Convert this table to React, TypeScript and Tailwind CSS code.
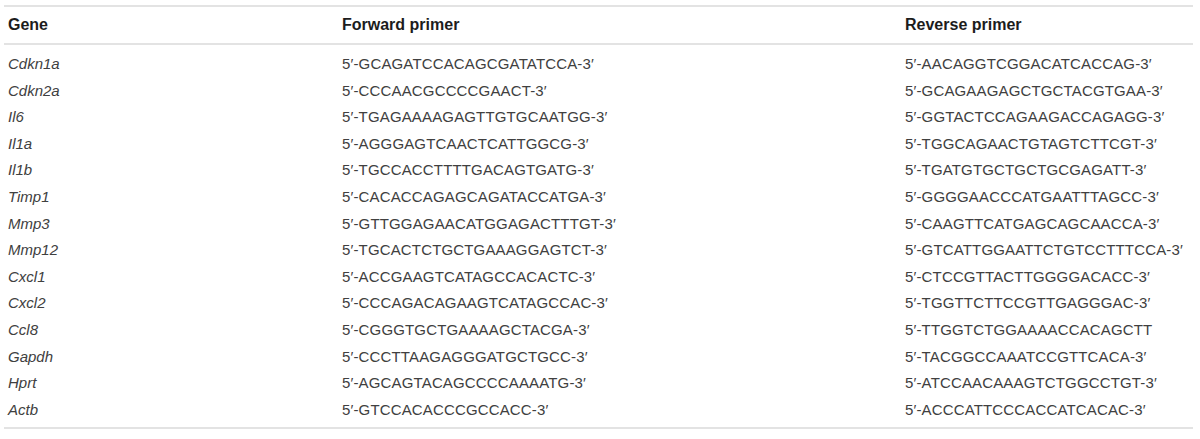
const rows: [string, string, string][] = [
  ['Cdkn1a', "5′-GCAGATCCACAGCGATATCCA-3′", "5′-AACAGGTCGGACATCACCAG-3′"],
  ['Cdkn2a', "5′-CCCAACGCCCCGAACT-3′", "5′-GCAGAAGAGCTGCTACGTGAA-3′"],
  ['Il6', "5′-TGAGAAAAGAGTTGTGCAATGG-3′", "5′-GGTACTCCAGAAGACCAGAGG-3′"],
  ['Il1a', "5′-AGGGAGTCAACTCATTGGCG-3′", "5′-TGGCAGAACTGTAGTCTTCGT-3′"],
  ['Il1b', "5′-TGCCACCTTTTGACAGTGATG-3′", "5′-TGATGTGCTGCTGCGAGATT-3′"],
  ['Timp1', "5′-CACACCAGAGCAGATACCATGA-3′", "5′-GGGGAACCCATGAATTTAGCC-3′"],
  ['Mmp3', "5′-GTTGGAGAACATGGAGACTTTGT-3′", "5′-CAAGTTCATGAGCAGCAACCA-3′"],
  ['Mmp12', "5′-TGCACTCTGCTGAAAGGAGTCT-3′", "5′-GTCATTGGAATTCTGTCCTTTCCA-3′"],
  ['Cxcl1', "5′-ACCGAAGTCATAGCCACACTC-3′", "5′-CTCCGTTACTTGGGGACACC-3′"],
  ['Cxcl2', "5′-CCCAGACAGAAGTCATAGCCAC-3′", "5′-TGGTTCTTCCGTTGAGGGAC-3′"],
  ['Ccl8', "5′-CGGGTGCTGAAAAGCTACGA-3′", "5′-TTGGTCTGGAAAACCACAGCTT"],
  ['Gapdh', "5′-CCCTTAAGAGGGATGCTGCC-3′", "5′-TACGGCCAAATCCGTTCACA-3′"],
  ['Hprt', "5′-AGCAGTACAGCCCCAAAATG-3′", "5′-ATCCAACAAAGTCTGGCCTGT-3′"],
  ['Actb', "5′-GTCCACACCCGCCACC-3′", "5′-ACCCATTCCCACCATCACAC-3′"],
];

export default function App() {
  return (
    <div className="w-[1200px] h-[439px] bg-white pt-[5px] pl-[4px] font-['Liberation_Sans',Arial,sans-serif]">
      <div className="w-[1189px] border-t-2 border-b-2 border-[#e3e3e3]">
        <div className="flex h-[38px] items-center border-b-2 border-[#e3e3e3] text-[16px] font-bold text-[#1c1c1c]">
          <div className="w-[338px] pl-[4px]">Gene</div>
          <div className="w-[563px]">Forward primer</div>
          <div className="flex-1">Reverse primer</div>
        </div>
        <div className="pt-[6px] pb-[4px] text-[15px] text-[#404040]">
          {rows.map(([gene, fwd, rev]) => (
            <div key={gene} className="flex h-[26.6px] items-center">
              <div className="w-[338px] pl-[4px] italic">{gene}</div>
              <div className="w-[563px] tracking-[0.15px]">{fwd}</div>
              <div className="flex-1 tracking-[0.15px]">{rev}</div>
            </div>
          ))}
        </div>
      </div>
    </div>
  );
}
